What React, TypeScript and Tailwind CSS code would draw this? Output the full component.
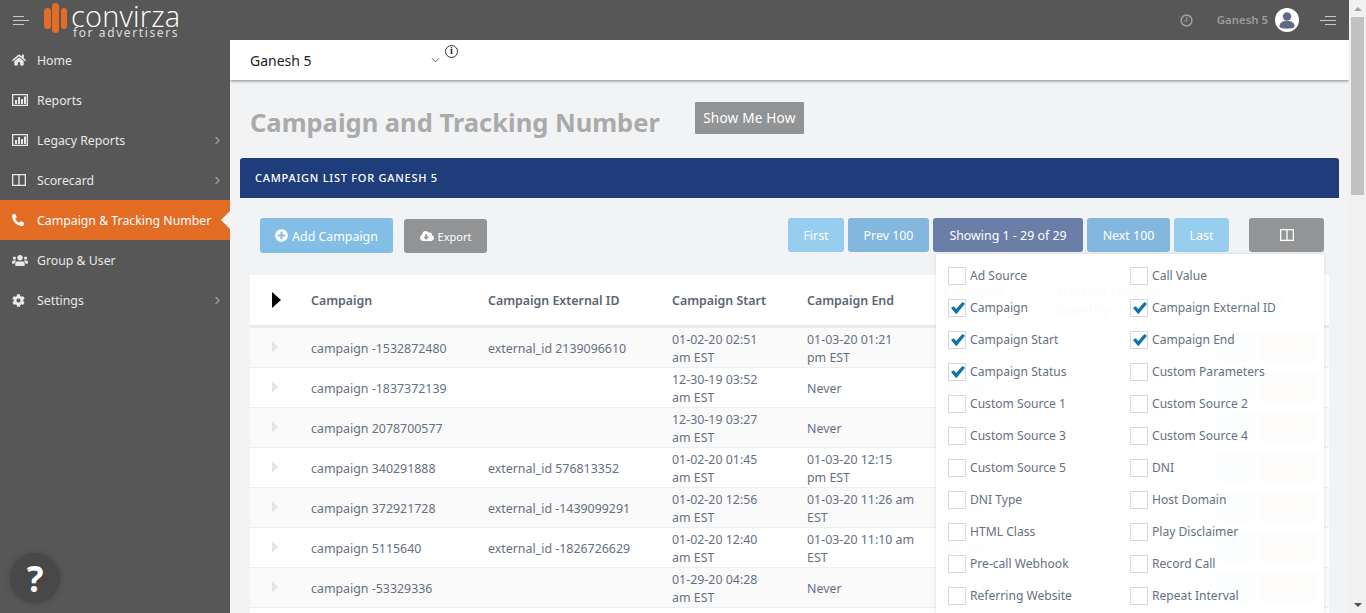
import React from "react";
import { FaHome, FaPhoneAlt, FaUsers, FaCog, FaPlusCircle, FaCloudDownloadAlt, FaChevronRight } from "react-icons/fa";

const font = "font-['Noto_Sans',sans-serif]";

function BarBox({ className = "" }: { className?: string }) {
  return (
    <svg viewBox="0 0 16 12" className={className} fill="currentColor">
      <path d="M0 0h16v12H0zM1.3 1.3v9.4h13.4V1.3z" fillRule="evenodd" />
      <rect x="3" y="6" width="2" height="4" />
      <rect x="6" y="3" width="2" height="7" />
      <rect x="9" y="5" width="2" height="5" />
      <rect x="12" y="2.5" width="2" height="7.5" />
    </svg>
  );
}

function ColumnsIcon({ className = "" }: { className?: string }) {
  return (
    <svg viewBox="0 0 14 12" className={className} fill="none" stroke="currentColor" strokeWidth="1.3">
      <rect x="0.65" y="0.65" width="12.7" height="10.7" />
      <path d="M7 .6v10.8" />
    </svg>
  );
}

function MenuLines({ flip }: { flip?: boolean }) {
  return (
    <div className={`flex w-4 flex-col gap-[3px] ${flip ? "items-end" : "items-start"}`}>
      <span className="h-px w-[11px] bg-[#c8c8c8]" />
      <span className="h-px w-4 bg-[#c8c8c8]" />
      <span className="h-px w-[11px] bg-[#c8c8c8]" />
    </div>
  );
}

const navItems: { label: string; icon: React.ReactNode; chevron?: boolean; active?: boolean }[] = [
  { label: "Home", icon: <FaHome className="h-[14px] w-[14px]" /> },
  { label: "Reports", icon: <BarBox className="h-3 w-4" /> },
  { label: "Legacy Reports", icon: <BarBox className="h-3 w-4" />, chevron: true },
  { label: "Scorecard", icon: <ColumnsIcon className="h-3 w-[14px]" />, chevron: true },
  { label: "Campaign & Tracking Number", icon: <FaPhoneAlt className="h-3 w-3" />, active: true },
  { label: "Group & User", icon: <FaUsers className="h-[15px] w-4" /> },
  { label: "Settings", icon: <FaCog className="h-[13px] w-[13px]" />, chevron: true },
];

function Sidebar() {
  return (
    <aside className="relative w-[230px] shrink-0 bg-[#575757]">
      {navItems.map((n) => (
        <div
          key={n.label}
          className={`relative flex h-10 items-center pl-3 pr-2 text-[12.3px] ${n.active ? "bg-[#e36d25] text-white" : "text-[#e8e8e8]"}`}
        >
          <span className="flex w-[25px] shrink-0 items-center justify-start">{n.icon}</span>
          <span className="flex-1 translate-y-px whitespace-nowrap">{n.label}</span>
          {n.chevron && <FaChevronRight className="h-[9px] w-[9px] text-[#9a9a9a]" />}
          {n.active && (
            <span className="absolute right-0 top-1/2 h-0 w-0 -translate-y-1/2 border-y-[9px] border-r-[9px] border-y-transparent border-r-[#f2f3f5]" />
          )}
        </div>
      ))}
      <div className="absolute left-[10px] top-[513px] flex h-[50px] w-[50px] items-center justify-center rounded-full bg-[#484848] text-[35px] font-bold leading-none text-white shadow-[0_0_6px_rgba(0,0,0,0.2)]">
        ?
      </div>
    </aside>
  );
}

function Header() {
  return (
    <header className="flex h-10 shrink-0 items-center bg-[#575757]">
      <div className="ml-[13px]">
        <MenuLines />
      </div>
      <div className="relative ml-[15px] h-10 w-[136px]">
        <svg viewBox="0 0 24 32" className="absolute left-0 top-[2px] h-8 w-6">
          <rect x="0" y="6" width="7" height="21" rx="3.5" fill="#e36d25" />
          <rect x="8" y="1" width="7" height="30" rx="3.5" fill="#e36d25" />
          <rect x="17" y="6" width="6" height="21" rx="3" fill="#e36d25" />
        </svg>
        <span className="absolute left-[27px] top-0 whitespace-nowrap text-[29px] font-light leading-[32px] tracking-[0.2px] text-white font-['Open_Sans',sans-serif]">
          convirza
        </span>
        <span className="absolute left-[29px] top-[25px] whitespace-nowrap text-[12px] leading-[15px] tracking-[1.6px] text-[#dedede]">
          for advertisers
        </span>
      </div>
      <div className="ml-auto flex items-center">
        <svg viewBox="0 0 14 14" className="h-[13px] w-[13px] text-[#9c9c9c]" fill="none" stroke="currentColor" strokeWidth="1.8">
          <circle cx="7" cy="7" r="5.8" />
          <path d="M7.2 3.5v4H4.5" strokeWidth="1.2" />
        </svg>
        <span className="ml-6 text-[11.4px] font-semibold text-[#9c9c9c]">Ganesh 5</span>
        <svg viewBox="0 0 24 24" className="ml-[7px] h-6 w-6">
          <circle cx="12" cy="12" r="12" fill="#fff" />
          <circle cx="12" cy="8.5" r="4.2" fill="#5f6b84" />
          <path d="M4.5 19c0-5 3-6 7.5-6s7.5 1 7.5 6c-2 2.2-13 2.2-15 0z" fill="#5f6b84" />
        </svg>
        <div className="ml-[21px] mr-[13px]">
          <MenuLines flip />
        </div>
      </div>
    </header>
  );
}

function PageBtn({ children, className = "" }: { children: React.ReactNode; className?: string }) {
  return (
    <button className={`flex h-[34px] items-center justify-center rounded-[3px] pt-0.5 text-[12.4px] text-white ${className}`}>
      {children}
    </button>
  );
}

function Toolbar() {
  return (
    <div className="flex h-[77px] items-start pl-5 pr-[15px] pt-5">
      <button className="flex h-[35px] w-[133px] items-center justify-center gap-1 rounded-[3px] bg-[#83bee6] pt-1 text-[12.4px] text-white">
        <FaPlusCircle className="h-[13px] w-[13px] -translate-y-0.5" />
        Add Campaign
      </button>
      <button className="ml-[11px] mt-px flex h-[34px] w-[83px] items-center justify-center gap-1 rounded-[3px] bg-[#919395] pt-0.5 text-[11px] text-white">
        <FaCloudDownloadAlt className="h-[14px] w-[14px] -translate-y-px" />
        Export
      </button>
      <div className="ml-auto flex gap-1">
        <PageBtn className="w-14 bg-[#97cdee]">First</PageBtn>
        <PageBtn className="w-[81px] bg-[#83b7dd]">Prev 100</PageBtn>
        <PageBtn className="w-[150px] bg-[#6a7ea8]">Showing 1 - 29 of 29</PageBtn>
        <PageBtn className="w-[83px] bg-[#83b7dd]">Next 100</PageBtn>
        <PageBtn className="w-[55px] bg-[#97cdee]">Last</PageBtn>
      </div>
      <PageBtn className="ml-5 w-[75px] bg-[#939597]">
        <ColumnsIcon className="h-3 w-[14px] -translate-y-px" />
      </PageBtn>
    </div>
  );
}

const rows: [string, string, string, string, string, string][] = [
  ["campaign -1532872480", "external_id 2139096610", "01-02-20 02:51", "am EST", "01-03-20 01:21", "pm EST"],
  ["campaign -1837372139", "", "12-30-19 03:52", "am EST", "Never", ""],
  ["campaign 2078700577", "", "12-30-19 03:27", "am EST", "Never", ""],
  ["campaign 340291888", "external_id 576813352", "01-02-20 01:45", "am EST", "01-03-20 12:15", "pm EST"],
  ["campaign 372921728", "external_id -1439099291", "01-02-20 12:56", "am EST", "01-03-20 11:26 am", "EST"],
  ["campaign 5115640", "external_id -1826726629", "01-02-20 12:40", "am EST", "01-03-20 11:10 am", "EST"],
  ["campaign -53329336", "", "01-29-20 04:28", "am EST", "Never", ""],
];

function Arrow({ className = "" }: { className?: string }) {
  return <span className={`inline-block h-0 w-0 border-y-[6px] border-l-[6px] border-y-transparent ${className}`} />;
}

function CampaignTable() {
  return (
    <table className="w-[1079px] table-fixed border-collapse bg-white text-[12.4px] text-[#66707f]">
      <colgroup>
        <col className="w-[45px]" />
        <col className="w-[177px]" />
        <col className="w-[184px]" />
        <col className="w-[135px]" />
        <col className="w-[136px]" />
        <col className="w-[113px]" />
        <col className="w-[160px]" />
        <col />
      </colgroup>
      <thead>
        <tr className="h-[51px] border-b-[3px] border-[#e9ebee] text-left font-semibold text-[#5b6475]">
          <th className="pl-[22px] font-semibold">
            <span className="inline-block h-0 w-0 translate-y-[3px] border-y-[8px] border-l-[9px] border-y-transparent border-l-black" />
          </th>
          <th className="pl-4 pt-[3px] font-semibold">Campaign</th>
          <th className="pl-4 pt-[3px] font-semibold">Campaign External ID</th>
          <th className="pl-4 pt-[3px] font-semibold">Campaign Start</th>
          <th className="pl-4 pt-[3px] font-semibold">Campaign End</th>
          <th className="pl-4 pt-[3px] font-semibold">Campaign Status</th>
          <th className="pl-4 pt-[3px] font-semibold">Tracking Number Quantity</th>
          <th className="pl-[38px] pt-[3px] font-semibold">Actions</th>
        </tr>
      </thead>
      <tbody>
        {rows.map((r, i) => (
          <tr key={i} className={`h-10 border-b border-[#eceef1] leading-[18px] ${i % 2 === 0 ? "bg-[#fafafb]" : "bg-white"}`}>
            <td className="pl-[22px] pt-[3px]">
              <Arrow className="border-l-[#e1e5ec]" />
            </td>
            <td className="whitespace-nowrap pl-4 pt-[3px]">{r[0]}</td>
            <td className="whitespace-nowrap pl-4 pt-[3px]">{r[1]}</td>
            <td className="whitespace-nowrap pl-4 pt-[3px]">
              {r[2]}
              <br />
              {r[3]}
            </td>
            <td className="whitespace-nowrap pl-4 pt-[3px]">
              {r[4]}
              {r[5] && <br />}
              {r[5]}
            </td>
            <td className="pl-4 pt-[3px]">Inactive</td>
            <td className="pl-4 pt-[3px] text-[#45c7e8]">3</td>
            <td>
              <div className="flex items-center gap-[3px] pl-4 text-white">
                <span className="flex h-[30px] w-[39px] items-center justify-center rounded-[3px] bg-[#83bee6]">Edit</span>
                <span className="flex h-[30px] w-[60px] items-center justify-center rounded-[3px] bg-[#f0a878]">Archive</span>
              </div>
            </td>
          </tr>
        ))}
        <tr className="h-10 bg-white" />
      </tbody>
    </table>
  );
}

const columnOptions: [string, boolean][] = [
  ["Ad Source", false],
  ["Call Value", false],
  ["Campaign", true],
  ["Campaign External ID", true],
  ["Campaign Start", true],
  ["Campaign End", true],
  ["Campaign Status", true],
  ["Custom Parameters", false],
  ["Custom Source 1", false],
  ["Custom Source 2", false],
  ["Custom Source 3", false],
  ["Custom Source 4", false],
  ["Custom Source 5", false],
  ["DNI", false],
  ["DNI Type", false],
  ["Host Domain", false],
  ["HTML Class", false],
  ["Play Disclaimer", false],
  ["Pre-call Webhook", false],
  ["Record Call", false],
  ["Referring Website", false],
  ["Repeat Interval", false],
];

function ColumnMenu() {
  return (
    <div className="absolute left-[696px] top-[96px] grid w-[388px] grid-cols-[182px_1fr] rounded-[3px] bg-white/[0.975] pb-10 pl-3 pt-[13px] text-[12.1px] text-[#66707f] shadow-[0_0_4px_rgba(0,0,0,0.12)]">
      {columnOptions.map(([label, on]) => (
        <label key={label} className="flex h-8 items-start gap-1">
          <span className="relative h-[18px] w-[18px] shrink-0 border border-[#d8d8d8] bg-white">
            {on && (
              <svg viewBox="0 0 16 14" className="absolute left-[2px] top-px h-[14px] w-[14px]" fill="#0f75a8">
                <path d="M0 7l3-2 3 3 7-8 3 2-10 12z" />
              </svg>
            )}
          </span>
          <span className="whitespace-nowrap leading-[17px]">{label}</span>
        </label>
      ))}
    </div>
  );
}

function Scrollbar() {
  return (
    <div className="flex h-full w-[17px] shrink-0 flex-col items-center bg-[#f1f1f1]">
      <div className="flex h-[17px] items-center">
        <span className="h-0 w-0 border-x-[4px] border-b-[4px] border-x-transparent border-b-[#a3a3a3]" />
      </div>
      <div className="h-[178px] w-[13px] bg-[#c1c1c1]" />
      <div className="mt-auto flex h-[17px] items-center">
        <span className="h-0 w-0 border-x-[4px] border-t-[4px] border-x-transparent border-t-[#505050]" />
      </div>
    </div>
  );
}

export default function App() {
  return (
    <div className={`flex h-[613px] w-[1366px] overflow-hidden bg-[#f2f3f5] ${font}`}>
      <div className="flex w-[1349px] shrink-0 flex-col">
        <Header />
        <div className="flex min-h-0 flex-1">
          <Sidebar />
          <main className="min-w-0 flex-1 overflow-hidden">
            <div className="flex h-10 items-center bg-white pl-5 shadow-[0_1px_3px_rgba(0,0,0,0.45)]">
              <span className="w-[181px] text-[14px] text-[#222]">Ganesh 5</span>
              <svg viewBox="0 0 10 6" className="h-[6px] w-[9px] text-[#5b6475]" fill="none" stroke="currentColor" strokeWidth="1.1">
                <path d="M1 1l4 4 4-4" />
              </svg>
              <span className="ml-[5px] mb-[18px] flex h-[13px] w-[13px] items-center justify-center rounded-full border border-[#333] font-['Liberation_Serif',serif] text-[10px] font-bold leading-none text-[#222]">
                i
              </span>
            </div>
            <div className="flex h-[78px] items-start pl-5">
              <h1 className="mt-[23px] text-[25.5px] font-bold leading-[38px] text-[#aaaaaa]">Campaign and Tracking Number</h1>
              <button className="ml-[35px] mt-[22px] h-8 w-[109px] rounded-[1px] bg-[#919395] text-[13.6px] tracking-[0.2px] text-white">
                Show Me How
              </button>
            </div>
            <section className="relative ml-[10px] w-[1099px]">
              <div className="flex h-10 items-center rounded-t-[3px] bg-[#1f3d7a] pl-[15px] text-[11px] font-medium tracking-[0.75px] text-white">
                CAMPAIGN LIST FOR GANESH 5
              </div>
              <Toolbar />
              <div className="pl-[10px]">
                <CampaignTable />
              </div>
              <ColumnMenu />
            </section>
          </main>
        </div>
      </div>
      <Scrollbar />
    </div>
  );
}
